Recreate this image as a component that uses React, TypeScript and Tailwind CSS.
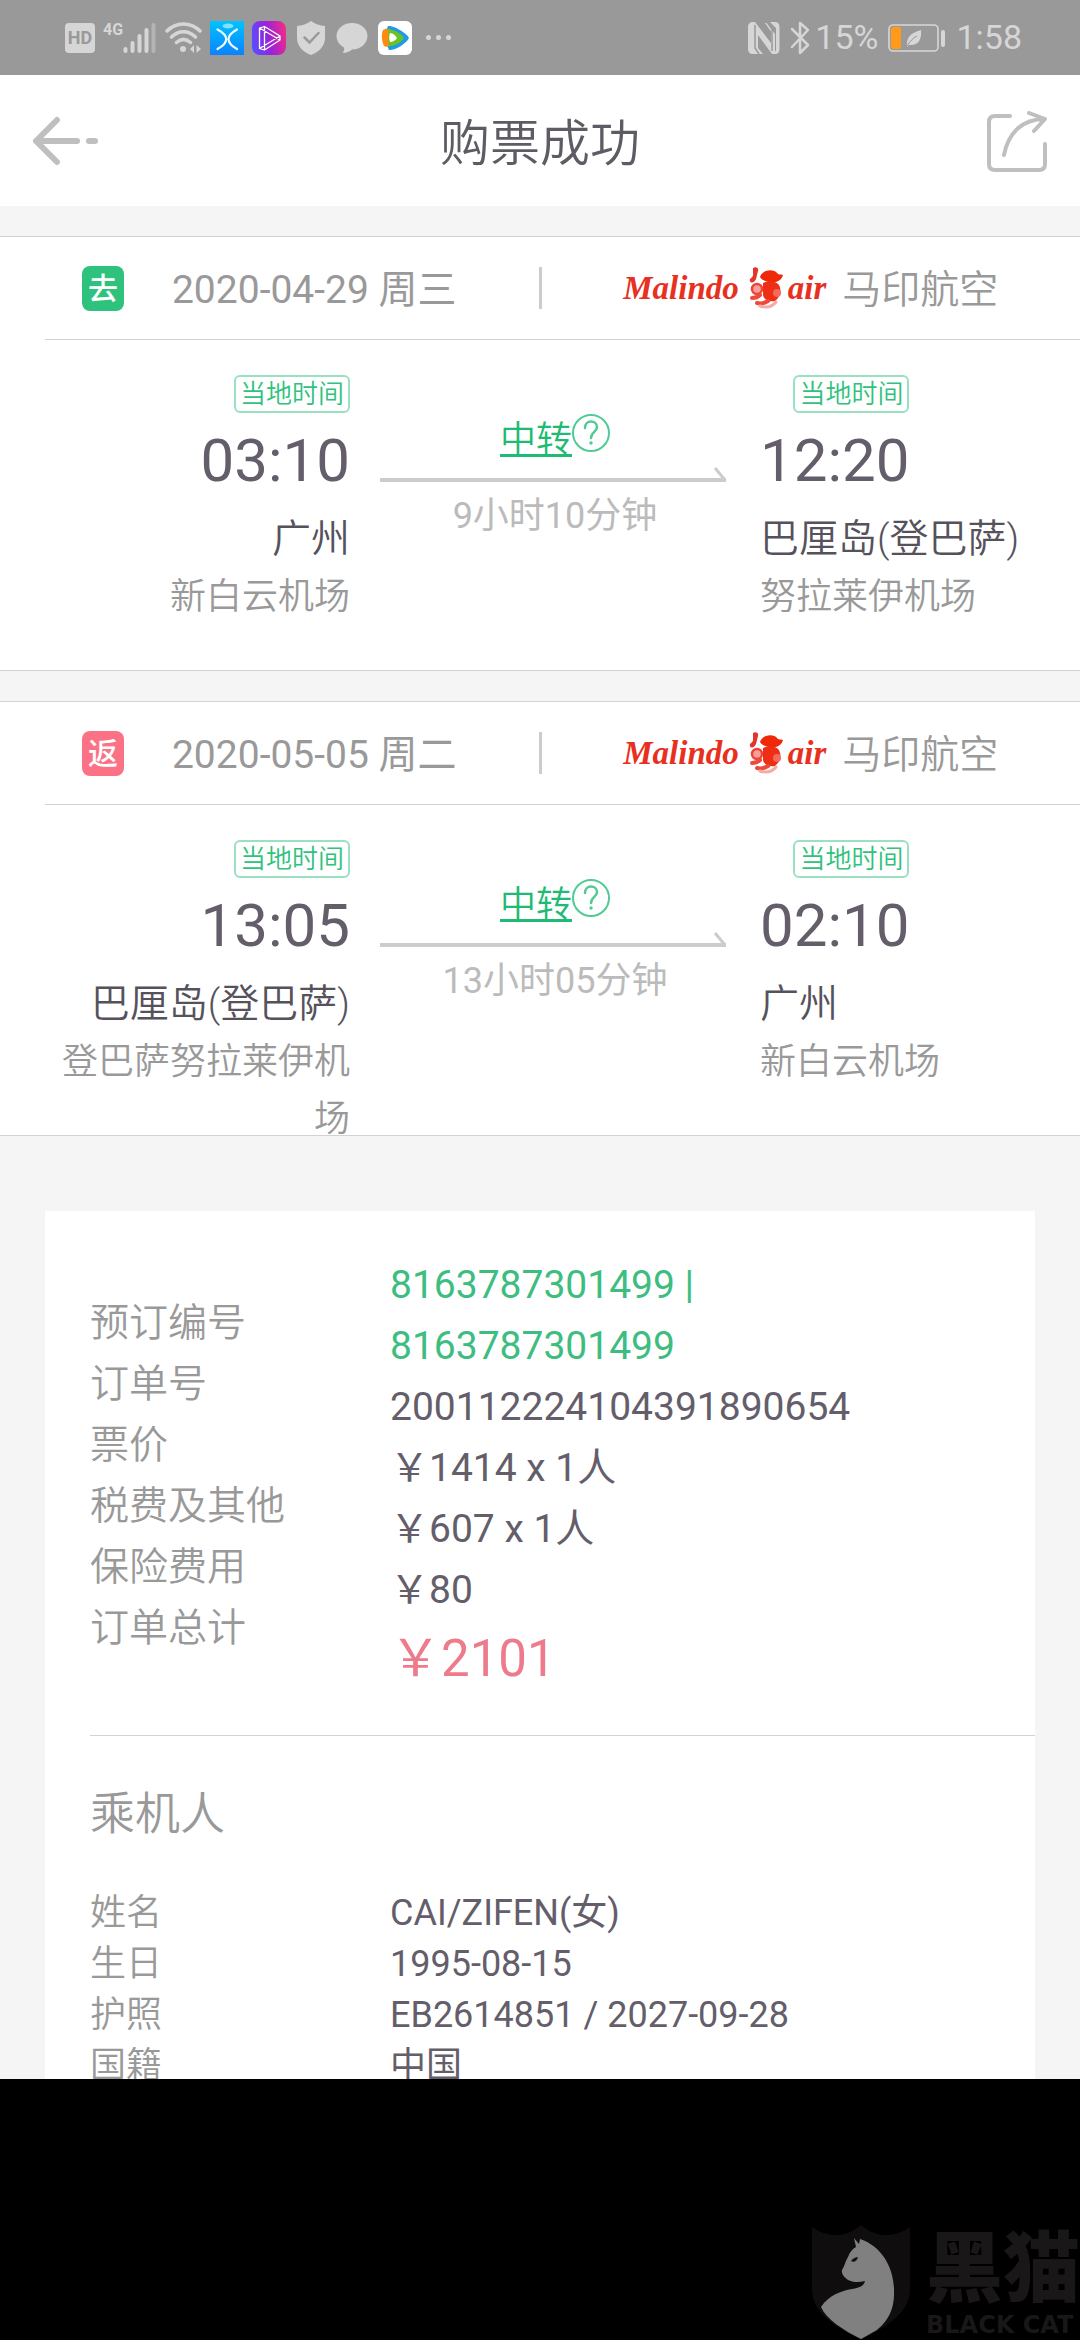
import React from 'react';

interface Stop {
  time: string;
  city: string;
  airport: string;
}

interface Flight {
  id: string;
  tag: string;
  tagClass: string;
  date: string;
  airline: string;
  duration: string;
  from: Stop;
  to: Stop;
}

const flights: Flight[] = [
  {
    id: 'outbound',
    tag: '去',
    tagClass: 'bg-[#2fc27c]',
    date: '2020-04-29 周三',
    airline: '马印航空',
    duration: '9小时10分钟',
    from: { time: '03:10', city: '广州', airport: '新白云机场' },
    to: { time: '12:20', city: '巴厘岛(登巴萨)', airport: '努拉莱伊机场' },
  },
  {
    id: 'return',
    tag: '返',
    tagClass: 'bg-[#fb7287]',
    date: '2020-05-05 周二',
    airline: '马印航空',
    duration: '13小时05分钟',
    from: { time: '13:05', city: '巴厘岛(登巴萨)', airport: '登巴萨努拉莱伊机场' },
    to: { time: '02:10', city: '广州', airport: '新白云机场' },
  },
];

const orderLabels = ['预订编号', '订单号', '票价', '税费及其他', '保险费用', '订单总计'];

const passenger = [
  { label: '姓名', value: 'CAI/ZIFEN(女)' },
  { label: '生日', value: '1995-08-15' },
  { label: '护照', value: 'EB2614851 / 2027-09-28' },
  { label: '国籍', value: '中国' },
];

const SignalIcon = () => (
  <svg width="34" height="32" viewBox="0 0 34 32" strokeWidth="4" strokeLinecap="round" stroke="#d6d6d6">
    <path d="M2.500 27v2M9.500 21v8M16.500 14v15M23.500 8v21" />
    <path d="M30.500 3v26" stroke="#b4b4b4" />
  </svg>
);

const WifiIcon = () => (
  <svg width="37" height="32" viewBox="0 0 37 32" fill="none" stroke="#d6d6d6" strokeWidth="3.500" strokeLinecap="round">
    <path d="M2 9C11-.5 26-.5 35 9M6.500 15c7-7 17-7 24 0M11.500 20.500c4.500-4 9.500-4 14 0" />
    <circle cx="18" cy="27" r="3" fill="#d6d6d6" stroke="none" />
    <path d="M29 23v8l-4-4zM31.500 31v-8l4.500 4z" fill="#d6d6d6" stroke="none" />
  </svg>
);

const BlueAppIcon = () => (
  <svg width="34" height="34" viewBox="0 0 34 34" fill="none">
    <defs>
      <linearGradient id="blueApp" x1="0" y1="0" x2="0" y2="1">
        <stop offset="0" stopColor="#00c3ff" />
        <stop offset="1" stopColor="#0b82ff" />
      </linearGradient>
    </defs>
    <path fill="url(#blueApp)" d="M0 0h34v34H0z" />
    <ellipse cx="18" cy="5" rx="5.500" ry="2.500" fill="#7fe0ff" />
    <path d="M7.500 8.500Q25 18 7.500 28M27 8.500Q10 18 27 28" stroke="#f2fcff" strokeWidth="2.200" strokeLinecap="round" />
  </svg>
);

const PurpleAppIcon = () => (
  <svg width="34" height="34" viewBox="0 0 34 34" fill="none">
    <defs>
      <linearGradient id="purpleApp" x1="0" y1="0.600" x2="1" y2="0.400">
        <stop offset="0" stopColor="#5a4dff" />
        <stop offset="0.500" stopColor="#9b22d8" />
        <stop offset="1" stopColor="#ee2a8c" />
      </linearGradient>
    </defs>
    <rect width="34" height="34" rx="8" fill="url(#purpleApp)" />
    <path
      d="M7.500 7l5-1.500L28 15v4L12.500 29l-5-1.500zM12.500 5.500V29M7.500 7L28 19M7.500 27.500L28 15"
      stroke="#fff"
      strokeWidth="1.300"
      strokeLinejoin="round"
    />
  </svg>
);

const ShieldIcon = () => (
  <svg width="30" height="34" viewBox="0 0 30 34" fill="none">
    <path d="M15 0c4 3 9 4.500 14 5v12c0 8-6 14-14 17C7 31 1 25 1 17V5c5-.5 10-2 14-5z" fill="#d6d6d6" />
    <path d="M8.500 16.500l5 5 9-9.500" stroke="#999" strokeWidth="2.500" strokeLinecap="round" />
  </svg>
);

const ChatIcon = () => (
  <svg width="32" height="32" viewBox="0 0 32 32" fill="#d6d6d6">
    <path d="M16 1c9 0 15.500 6 15.500 13S25 27.500 16 27.500c-1.500 1.500-5 3.500-9.500 3.500 1.500-1.500 2-3.500 1.500-5.500C3.500 23 .5 19 .5 14 .5 7 7 1 16 1z" />
  </svg>
);

const VideoAppIcon = () => (
  <svg width="34" height="34" viewBox="0 0 34 34">
    <rect width="34" height="34" rx="6" fill="#fff" />
    <path d="M10 5c5-1 19 7 21 12-3 6-15 13-20 12-3-6-4-18-1-24z" fill="#1d9be8" />
    <path d="M7 8c5-1 16 4 19 9-4 6-12 9-18 8C5 20 5 12 7 8z" fill="#6cc220" />
    <path d="M5 9c1-1 4-1 6 0-1 5-1 12 0 16-2 1-4 1-5 0-2-4-3-11-1-16z" fill="#ff8a12" />
    <path d="M12 12c3 0 6 3 7 5-1 2-4 4-7 4-1-2-1-7 0-9z" fill="#fff" />
  </svg>
);

const NfcIcon = () => (
  <svg width="32" height="34" viewBox="0 0 32 34" fill="#d6d6d6">
    <path d="M5 1h2l16 21V10.500L17 2h2l8 11v20h-3L10 14v13l5 6H5c-3 0-5-2-5-5V6c0-3 2-5 5-5z" />
    <path d="M22 1h5c3 0 4.500 2 4.500 5v22c0 3-1.500 5-4.500 5h-1l2-4V7z" />
    <path d="M7 4v23l4 6M24 30V8l-5-7" stroke="#999" strokeWidth="1.500" fill="none" />
  </svg>
);

const BluetoothIcon = () => (
  <svg width="20" height="34" viewBox="0 0 20 34" fill="none" stroke="#d6d6d6" strokeWidth="2.500" strokeLinejoin="round" strokeLinecap="round">
    <path d="M2 8l16 16-8 8V2l8 7L2 26" />
  </svg>
);

const BatteryIcon = () => (
  <svg width="58" height="28" viewBox="0 0 58 28" fill="none">
    <rect x="1" y="1" width="49" height="26" rx="4" stroke="#d6d6d6" strokeWidth="1.600" />
    <rect x="3" y="3" width="10" height="22" rx="2" fill="#ff9a1a" />
    <path d="M33 6c1 10-3 16-12 15l-2 2c-1-9 3-14 14-17z" fill="#d6d6d6" />
    <path d="M19 22c3-5 6-8 10-10" stroke="#999" />
    <rect x="53" y="6" width="4" height="17" rx="2" fill="#d6d6d6" />
  </svg>
);

const BackIcon = () => (
  <svg width="68" height="52" viewBox="0 0 68 52" fill="none" stroke="#bfbfbf" strokeWidth="6" strokeLinecap="round" strokeLinejoin="round">
    <path d="M25 5L4 26l21 21M4 26h41M57 26h6" />
  </svg>
);

const ShareIcon = () => (
  <svg width="62" height="62" viewBox="0 0 62 62" fill="none" stroke="#bfbfbf" strokeWidth="4" strokeLinecap="round" strokeLinejoin="round">
    <path d="M24 6H9c-4 0-6 2-6 6v42c0 4 2 6 6 6h44c4 0 6-2 6-6V34" />
    <path d="M18 45C22 24 35 9 59 9M43 3l16 6-11 12" />
  </svg>
);

const QuestionIcon = () => (
  <svg width="38" height="40" viewBox="0 0 38 40" fill="none" stroke="#4fcb93" strokeWidth="2" strokeLinecap="round">
    <circle cx="19" cy="20" r="18" />
    <path d="M13 15c0-9 12-8 12-1 0 5-6 5-6 11" strokeWidth="2.500" />
    <circle cx="19" cy="30" r="1" strokeWidth="1.500" fill="#4fcb93" />
  </svg>
);

// Flower emblem that sits between the two words of the airline logo
const AirlineEmblem = () => (
  <svg width="37" height="42" viewBox="0 0 37 42" fill="none">
    <path d="M6 1c3-2 6 0 5 3L9 12c-1 3-5 5-6 2s3-3 3-6z" fill="#e3352c" />
    <path d="M13 10c3-8 14-8 17-4 1 2 4 1 6 2-1 4-4 6-7 7-6 1-13 0-16-5z" fill="#f0280a" />
    <path d="M16 16c6-3 13-2 16 2 3 6 1 12-4 16-6 1-11-1-12-6z" fill="#ee2f16" />
    <circle cx="30" cy="26" r="4" fill="#f26a60" />
    <circle cx="10" cy="22" r="5" fill="#f7a09a" stroke="#ec4438" strokeWidth="2.500" />
    <path d="M5 31c3 0 6-1 8-3M10 36c4 1 8 0 11-2" stroke="#ee4a3c" strokeWidth="4" strokeLinecap="round" />
    <path d="M13 39c6 2 12 1 16-4" stroke="#f7a9a4" strokeWidth="3" strokeLinecap="round" />
  </svg>
);

const AirlineLogo = () => (
  <span className="flex items-center font-['Liberation_Serif',serif] text-[33px] leading-[42px] font-bold text-[#e8301f] italic">
    Malindo
    <span className="mr-1 ml-2">
      <AirlineEmblem />
    </span>
    air
  </span>
);

const StatusBar = () => (
  <div className="flex h-[75px] shrink-0 items-center justify-between bg-[#999] pr-[58px] pl-[65px] text-[34px] text-[#d6d6d6]">
    <div className="flex items-center gap-2">
      <span className="flex size-[30px] items-center justify-center rounded bg-[#d6d6d6] text-lg font-bold text-[#999]">HD</span>
      <div className="flex items-start">
        <span className="text-base leading-4 font-bold">4G</span>
        <SignalIcon />
      </div>
      <WifiIcon />
      <BlueAppIcon />
      <PurpleAppIcon />
      <div className="flex items-center gap-[10px] px-[2px]">
        <ShieldIcon />
        <ChatIcon />
      </div>
      <VideoAppIcon />
      <div className="flex gap-[5px] pl-[6px]">
        <i className="size-[5px] rounded-full bg-[#d6d6d6]" />
        <i className="size-[5px] rounded-full bg-[#d6d6d6]" />
        <i className="size-[5px] rounded-full bg-[#d6d6d6]" />
      </div>
    </div>
    <div className="flex items-center gap-[10px]">
      <NfcIcon />
      <div className="flex items-center gap-[5px]">
        <BluetoothIcon />
        <span>15%</span>
      </div>
      <BatteryIcon />
      <span>1:58</span>
    </div>
  </div>
);

const Header = () => (
  <header className="flex h-[131px] shrink-0 items-center justify-between bg-white px-8">
    <button className="w-[68px]" aria-label="返回">
      <BackIcon />
    </button>
    <h1 className="pt-2 text-[50px] font-[350] text-[#5f5b64]">购票成功</h1>
    <button className="flex w-[68px] justify-end" aria-label="分享">
      <ShareIcon />
    </button>
  </header>
);

const StopTime = ({ time }: { time: string }) => (
  <div className="flex w-fit flex-col items-end">
    <span className="h-[38px] rounded-md border-2 border-[#9be0c0] px-1 text-[26px] leading-[34px] font-[350] text-[#2fc27c]">
      当地时间
    </span>
    <time className="text-[60px] leading-[96px] text-[#645e6b]">{time}</time>
  </div>
);

const FlightCard = ({ flight }: { flight: Flight }) => (
  <section className="h-[435px] border-y border-[#d2d2d2] bg-white">
    <div className="ml-[45px] border-b border-[#d2d2d2]">
      <div className="-ml-[45px] flex h-[102px] items-center text-[39px] text-[#999]">
        <div className="flex flex-1 items-center justify-center gap-12">
          <span className={`flex h-[45px] w-[42px] items-center justify-center rounded-lg text-[30px] font-medium text-white ${flight.tagClass}`}>
            {flight.tag}
          </span>
          <span className="pt-1">{flight.date}</span>
        </div>
        <i className="h-[42px] w-[3px] bg-[#ccc]" />
        <div className="flex flex-1 items-center justify-center gap-4">
          <AirlineLogo />
          <span className="pt-1 font-[350]">{flight.airline}</span>
        </div>
      </div>
    </div>
    <div className="grid grid-cols-[305fr_350fr_320fr] gap-[30px] pt-[35px] pl-[45px]">
      <div className="flex flex-col items-end text-right">
        <StopTime time={flight.from.time} />
        <p className="text-[39px] leading-[60px] font-[350] text-[#56525c]">{flight.from.city}</p>
        <p className="text-[36px] leading-[57px] font-[350] text-[#999]">{flight.from.airport}</p>
      </div>
      <div className="flex flex-col items-center pt-[38px]">
        <div className="flex items-start">
          <a href="#transfer" className="text-[36px] leading-[54px] font-[350] text-[#1fba73] underline underline-offset-2">
            中转
          </a>
          <button aria-label="中转说明">
            <QuestionIcon />
          </button>
        </div>
        <svg className="h-4 w-full" viewBox="0 0 350 16" preserveAspectRatio="none" fill="none" stroke="#ccc">
          <path d="M0 13h346" strokeWidth="4" />
          <path d="M335 1l10 12" strokeWidth="3" />
        </svg>
        <p className="pt-[5px] text-[36px] leading-[57px] text-[#bbb]">{flight.duration}</p>
      </div>
      <div>
        <StopTime time={flight.to.time} />
        <p className="text-[39px] leading-[60px] font-[350] text-[#56525c]">{flight.to.city}</p>
        <p className="text-[36px] leading-[57px] font-[350] text-[#999]">{flight.to.airport}</p>
      </div>
    </div>
  </section>
);

const OrderDetail = () => (
  <section className="mx-[45px] mt-[75px] bg-white pl-[45px]">
    <div className="flex items-center border-b border-[#d2d2d2] pt-11 pb-[38px] text-[39px] leading-[61px]">
      <ul className="w-[300px] font-[350] text-[#999]">
        {orderLabels.map((label) => (
          <li key={label}>{label}</li>
        ))}
      </ul>
      <ul className="text-[#645e6b]">
        <li className="text-[#3dbd80]">
          8163787301499 |<br />
          8163787301499
        </li>
        <li>200112224104391890654</li>
        <li>￥1414 x 1人</li>
        <li>￥607 x 1人</li>
        <li>￥80</li>
        <li className="text-[51px] leading-[76px] text-[#ee7b8c]">￥2101</li>
      </ul>
    </div>
    <h2 className="pt-11 text-[45px] leading-[70px] font-[350] text-[#999]">乘机人</h2>
    <dl className="grid grid-cols-[300px_1fr] pt-[38px] pb-12 text-[36px] leading-[51px]">
      {passenger.map((item) => (
        <React.Fragment key={item.label}>
          <dt className="font-[350] text-[#999]">{item.label}</dt>
          <dd className="text-[#645e6b]">{item.value}</dd>
        </React.Fragment>
      ))}
    </dl>
  </section>
);

const BlackCatMark = () => (
  <div className="flex items-end gap-4">
    <svg width="98" height="115" viewBox="0 0 98 115">
      <path d="M0 2c16 11 34 11 49-2 15 13 33 13 49 2v62c0 25-25 38-49 51C25 102 0 89 0 64z" fill="#0f0d0e" />
      <path
        d="M42 13l5 6 1-5c24 8 35 32 34 55 0 20-10 30-17 36l-16 9C31 105 14 94 9 82c8-12 20-16 31-18 7-1 12-3 13-8-7 2-13 1-17-1-4-3-7-6-6-10 3-4 3-9 6-13 2-5 4-8 8-10z"
        fill="#808080"
      />
      <path d="M39 36c2-3 5-4 7-4-1 4-4 6-7 4z" fill="#111" />
    </svg>
    <div className="flex flex-col text-[#191718]">
      <span className="text-[77px] leading-[80px] font-black">黑猫</span>
      <span className="font-['DejaVu_Sans',sans-serif] text-[24px] leading-[30px] font-bold whitespace-nowrap">BLACK CAT</span>
    </div>
  </div>
);

const App = () => {
  return (
    <div className="flex h-screen flex-col bg-[#f5f5f5] font-['Roboto','Noto_Sans_CJK_SC',sans-serif]">
      <StatusBar />
      <Header />
      <main className="min-h-0 flex-1 overflow-hidden pt-[30px]">
        <div className="flex flex-col gap-[30px]">
          {flights.map((flight) => (
            <FlightCard key={flight.id} flight={flight} />
          ))}
        </div>
        <OrderDetail />
      </main>
      <footer className="flex h-[261px] shrink-0 items-end justify-end overflow-hidden bg-black">
        <BlackCatMark />
      </footer>
    </div>
  );
};

export default App;
